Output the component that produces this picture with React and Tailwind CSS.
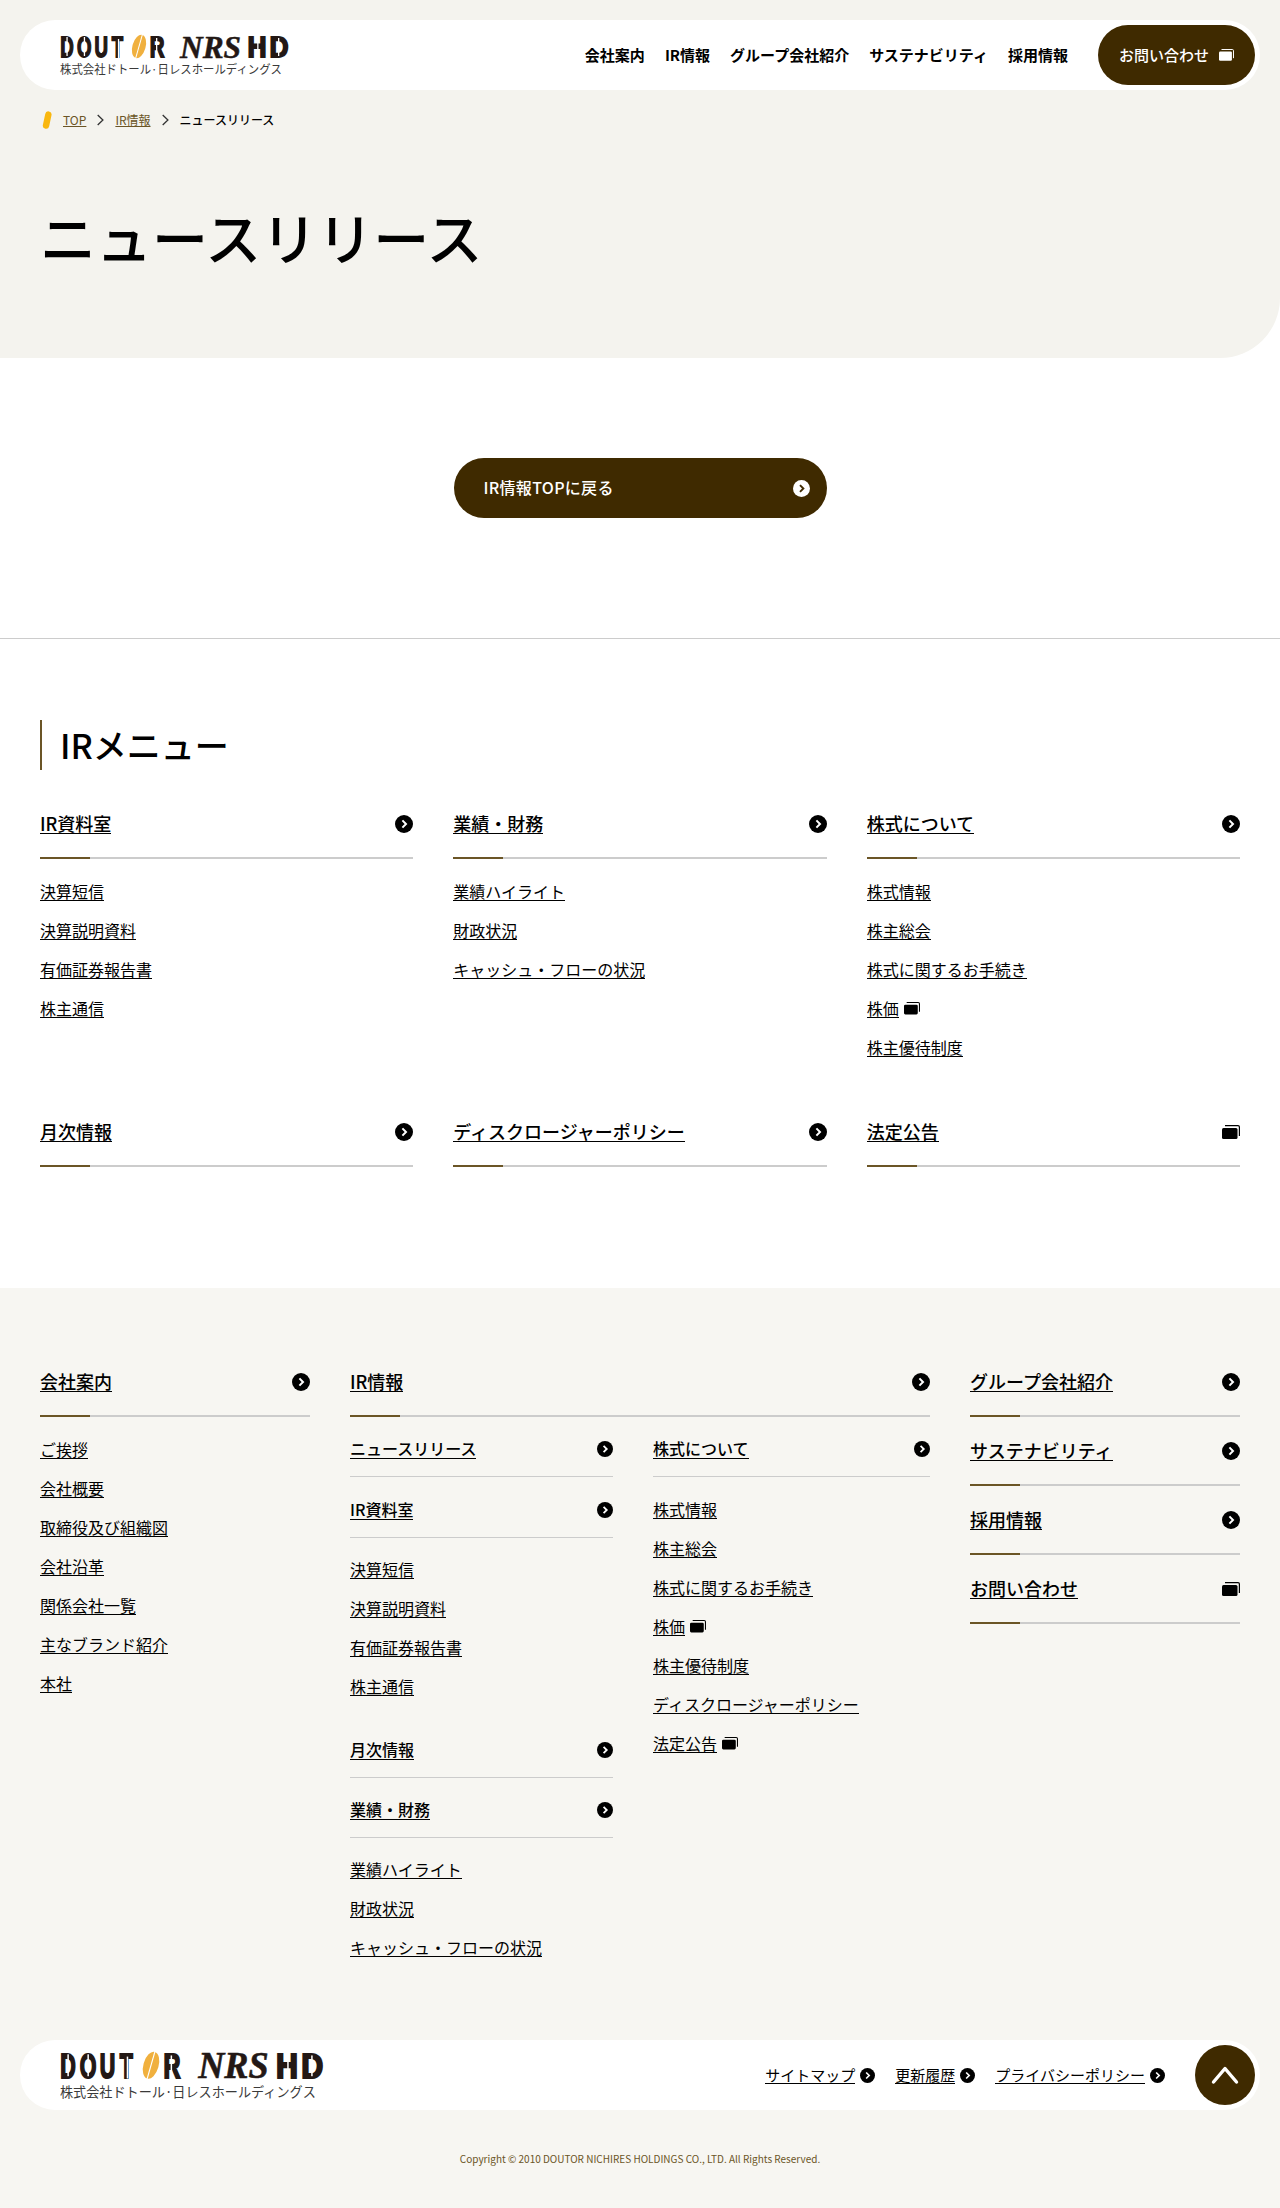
import React from "react";

const FONT = "font-['Noto_Sans_CJK_JP','Noto_Sans',sans-serif]";

function Arrow({ size = 18, invert = false }) {
  return (
    <svg width={size} height={size} viewBox="0 0 18 18" className="shrink-0">
      <circle cx="9" cy="9" r="9" fill={invert ? "#fff" : "#000"} />
      <path d="M7.4 5.4 L11 9 L7.4 12.6" fill="none" stroke={invert ? "#3f2a00" : "#fff"} strokeWidth="2" />
    </svg>
  );
}

function External({ w = 18, color = "#000" }) {
  return (
    <svg width={w} height={(w * 14) / 18} viewBox="0 0 18 14" className="shrink-0">
      <rect x="0" y="3" width="15.5" height="11" rx="1.5" fill={color} />
      <path d="M3 0.6 H16 a1.4 1.4 0 0 1 1.4 1.4 V11" fill="none" stroke={color} strokeWidth="1.2" />
    </svg>
  );
}

function Logo({ width = 230 }) {
  const ink = "#231815";
  const Slit = ({ x, y = 2, h = 19 }) => <rect x={x} y={y} width="1.3" height={h} fill="#fff" />;
  return (
    <svg width={width} height={(width * 42) / 230} viewBox="0 0 230 42" className="block overflow-visible">
      <text transform="scale(0.62 1)" x="0.5 27.5 55.5 83.5" y="22.2" fontFamily="Liberation Sans" fontWeight="700" fontSize="30" fill={ink} stroke={ink} strokeWidth="1.8">
        DOUT
      </text>
      <Slit x={6.4} />
      <Slit x={23.8} />
      <Slit x={40.6} y={0} h={18} />
      <Slit x={57.9} y={4} h={19} />
      <g transform="rotate(16 79 11.5)">
        <ellipse cx="79" cy="11.5" rx="6.6" ry="12" fill="#f0b03e" />
        <rect x="78.5" y="-1" width="1" height="25" fill="#fff" />
      </g>
      <text transform="scale(0.68 1)" x="132" y="22.2" fontFamily="Liberation Sans" fontWeight="700" fontSize="30" fill={ink} stroke={ink} strokeWidth="1.8">
        R
      </text>
      <Slit x={96} y={3} h={19} />
      <text x="120" y="22.5" fontFamily="Liberation Serif" fontWeight="700" fontStyle="italic" fontSize="32" textLength="61" lengthAdjust="spacingAndGlyphs" fill={ink} stroke={ink} strokeWidth="0.5">
        NRS
      </text>
      <text transform="scale(0.88 1)" x="213 238" y="22.2" fontFamily="Liberation Sans" fontWeight="700" fontSize="30" fill={ink} stroke={ink} strokeWidth="1.8">
        HD
      </text>
      <Slit x={197.2} y={0} h={23} />
      <Slit x={218} y={3} h={18} />
      <text x="0" y="39" fontFamily="Noto Sans CJK JP" fontSize="12" textLength="222" lengthAdjust="spacingAndGlyphs" fill="#3a3a3a">
        株式会社ドトール·日レスホールディングス
      </text>
    </svg>
  );
}

function Bar() {
  return (
    <div className="flex h-[2px]">
      <div className="w-[50px] bg-[#6b5526]" />
      <div className="flex-1 bg-[#cccccc]" />
    </div>
  );
}

function Title({ text, ext = false, className = "" }) {
  return (
    <div className={className}>
      <a className="flex items-center justify-between h-[26px] mb-[20px] text-[18px] font-medium text-black">
        <span className="leading-[1.1] border-b border-black">{text}</span>
        {ext ? <External /> : <Arrow />}
      </a>
      <Bar />
    </div>
  );
}

function SubTitle({ text, className = "" }) {
  return (
    <div className={className}>
      <a className="flex items-center justify-between h-[24px] mb-[15px] text-[16px] font-medium text-black">
        <span className="leading-[1.15] border-b border-black">{text}</span>
        <Arrow size={16} />
      </a>
      <div className="h-px bg-[#cccccc]" />
    </div>
  );
}

function Items({ items, className = "" }) {
  return (
    <ul className={`flex flex-col gap-[16px] ${className}`}>
      {items.map((it) => {
        const ext = it.endsWith("*");
        const label = ext ? it.slice(0, -1) : it;
        return (
          <li key={label} className="h-[23px] flex items-center gap-[5px] text-[16px] text-black">
            <a className="leading-[1.15] border-b border-black">{label}</a>
            {ext && <External w={16} />}
          </li>
        );
      })}
    </ul>
  );
}

function Chevron() {
  return (
    <svg width="9" height="12" viewBox="0 0 9 12" className="shrink-0">
      <path d="M1.7 1 L6.9 6 L1.7 11" fill="none" stroke="#333" strokeWidth="1.3" />
    </svg>
  );
}

function MenuCard({ title, items, ext }) {
  return (
    <div>
      <Title text={title} ext={ext} />
      {items && <Items items={items} className="mt-[21px]" />}
    </div>
  );
}

export default function App() {
  return (
    <div className={`${FONT} text-black bg-white w-[1280px]`}>
      {/* Hero */}
      <section className="bg-[#f4f3ee] h-[358px] rounded-br-[60px] pt-[20px]">
        <header className="mx-[20px] h-[70px] bg-white rounded-[35px] flex items-center pl-[40px] pr-[5px]">
          <div className="pt-[2px]">
            <Logo />
          </div>
          <nav className="ml-auto flex items-center gap-[20px] text-[15px] font-semibold">
            <a>会社案内</a>
            <a>IR情報</a>
            <a>グループ会社紹介</a>
            <a>サステナビリティ</a>
            <a>採用情報</a>
          </nav>
          <a className="ml-[30px] w-[157px] h-[60px] rounded-full bg-[#3f2a00] text-white text-[15px] font-medium flex items-center gap-[10px] pl-[21px]">
            お問い合わせ
            <External w={15} color="#fff" />
          </a>
        </header>
        <div className="mt-[18px] pl-[41px] flex items-center gap-[10px] text-[12px] h-[24px]">
          <svg width="12" height="18" viewBox="0 0 12 18" className="shrink-0">
            <rect x="3" y="0.2" width="6.4" height="17.6" rx="3.2" fill="#f9b70f" transform="rotate(12 6 9)" />
          </svg>
          <a className="text-[#6b5526] underline">TOP</a>
          <Chevron />
          <a className="text-[#6b5526] underline">IR情報</a>
          <Chevron />
          <span className="font-medium">ニュースリリース</span>
        </div>
        <h1 className="mt-[64px] pl-[40px] text-[56px] leading-[80px] font-medium">ニュースリリース</h1>
      </section>

      {/* Back button */}
      <section className="pt-[100px] pb-[120px] border-b border-[#cccccc]">
        <div className="flex justify-center">
          <a className="w-[373px] h-[60px] rounded-full bg-[#3f2a00] text-white text-[16px] font-medium flex items-center justify-between pl-[30px] pr-[17px]">
            <span className="mt-[-2px] tracking-[0.3px]">IR情報TOPに戻る</span>
            <Arrow size={17} invert />
          </a>
        </div>
      </section>

      {/* IR menu */}
      <section className="px-[40px] pt-[81px] pb-[121px]">
        <h2 className="border-l-2 border-[#6b5526] pl-[18px] h-[50px] flex items-center text-[34px] font-medium leading-none">
          IRメニュー
        </h2>
        <div className="mt-[41px] grid grid-cols-3 gap-x-[40px] gap-y-[60px]">
          <MenuCard title="IR資料室" items={["決算短信", "決算説明資料", "有価証券報告書", "株主通信"]} />
          <MenuCard title="業績・財務" items={["業績ハイライト", "財政状況", "キャッシュ・フローの状況"]} />
          <MenuCard title="株式について" items={["株式情報", "株主総会", "株式に関するお手続き", "株価*", "株主優待制度"]} />
          <MenuCard title="月次情報" />
          <MenuCard title="ディスクロージャーポリシー" />
          <MenuCard title="法定公告" ext />
        </div>
      </section>

      {/* Footer */}
      <footer className="bg-[#f7f6f2] pt-[81px] pb-[40px]">
        <div className="px-[40px] flex">
          <div className="w-[270px]">
            <Title text="会社案内" />
            <Items className="mt-[21px]" items={["ご挨拶", "会社概要", "取締役及び組織図", "会社沿革", "関係会社一覧", "主なブランド紹介", "本社"]} />
          </div>
          <div className="ml-[40px] w-[580px]">
            <Title text="IR情報" />
            <div className="mt-[20px] flex gap-[40px]">
              <div className="w-[263px]">
                <SubTitle text="ニュースリリース" />
                <SubTitle text="IR資料室" className="mt-[21px]" />
                <Items className="mt-[20px]" items={["決算短信", "決算説明資料", "有価証券報告書", "株主通信"]} />
                <SubTitle text="月次情報" className="mt-[40px]" />
                <SubTitle text="業績・財務" className="mt-[20px]" />
                <Items className="mt-[20px]" items={["業績ハイライト", "財政状況", "キャッシュ・フローの状況"]} />
              </div>
              <div className="flex-1">
                <SubTitle text="株式について" />
                <Items
                  className="mt-[21px]"
                  items={["株式情報", "株主総会", "株式に関するお手続き", "株価*", "株主優待制度", "ディスクロージャーポリシー", "法定公告*"]}
                />
              </div>
            </div>
          </div>
          <div className="ml-[40px] flex-1 flex flex-col gap-[21px]">
            <Title text="グループ会社紹介" />
            <Title text="サステナビリティ" />
            <Title text="採用情報" />
            <Title text="お問い合わせ" ext />
          </div>
        </div>

        <div className="mt-[81px] mx-[20px] h-[70px] bg-white rounded-[35px] flex items-center pl-[40px] pr-[5px]">
          <div className="pt-[2px]">
            <Logo width={265} />
          </div>
          <div className="ml-auto flex items-center gap-[20px] text-[15px]">
            <a className="flex items-center gap-[5px]">
              <span className="leading-[1.15] border-b border-black">サイトマップ</span>
              <Arrow size={15} />
            </a>
            <a className="flex items-center gap-[5px]">
              <span className="leading-[1.15] border-b border-black">更新履歴</span>
              <Arrow size={15} />
            </a>
            <a className="flex items-center gap-[5px]">
              <span className="leading-[1.15] border-b border-black">プライバシーポリシー</span>
              <Arrow size={15} />
            </a>
          </div>
          <a className="ml-[30px] w-[60px] h-[60px] rounded-full bg-[#3f2a00] flex items-center justify-center">
            <svg width="28" height="22" viewBox="0 0 28 22">
              <path d="M2.5 18 L14 4.5 L25.5 18" fill="none" stroke="#fff" strokeWidth="3.4" strokeLinecap="round" strokeLinejoin="round" />
            </svg>
          </a>
        </div>
        <p className="mt-[40px] text-center text-[10px] leading-[18px] text-[#6b5526]">
          Copyright © 2010 DOUTOR NICHIRES HOLDINGS CO., LTD. All Rights Reserved.
        </p>
      </footer>
    </div>
  );
}
